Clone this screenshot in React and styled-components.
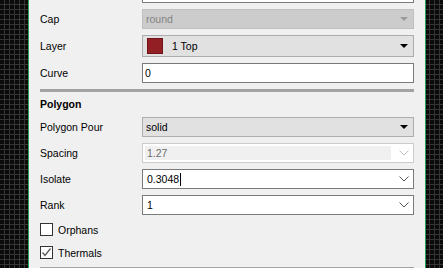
import React from "react";
import styled, { createGlobalStyle } from "styled-components";

const Global = createGlobalStyle`
  html, body { margin: 0; padding: 0; overflow: hidden; }
  body {
    width: 443px; height: 268px;
    font-family: "Liberation Sans", Arial, sans-serif;
    font-size: 10.5px;
    color: #000;
  }
`;

const Page = styled.div`
  display: flex;
  width: 443px;
  height: 268px;
  background-color: #0b0b0b;
  background-image:
    linear-gradient(to right, #353535 1px, transparent 1px),
    linear-gradient(to bottom, #353535 1px, transparent 1px);
  background-size: 5px 5px;
  background-position: 4px 4px;
`;

const Gutter = styled.div`
  width: ${(p) => p.$w || 28}px;
  flex: ${(p) => (p.$grow ? 1 : "none")};
`;

const Panel = styled.div`
  width: 396px;
  height: 268px;
  background: #f0f0f0;
  border-left: 1px solid #23a05a;
  border-right: 1px solid #23a05a;
  overflow: hidden;
  box-sizing: content-box;
`;

const Content = styled.div`
  display: flex;
  flex-direction: column;
  gap: 6px;
  padding: 0 11px;
  margin-top: -17px;
`;

const Row = styled.div`
  display: grid;
  grid-template-columns: 102px 1fr;
  align-items: center;
  height: ${(p) => p.$h || 20}px;
`;

const Label = styled.span`
  white-space: nowrap;
`;

const Title = styled.div`
  font-weight: bold;
  height: 13px;
  line-height: 13px;
`;

const Separator = styled.div`
  height: 3px;
  background: #a3a3a3;
`;

const Field = styled.div`
  box-sizing: border-box;
  height: 100%;
  display: flex;
  align-items: center;
  border: 1px solid ${(p) => p.$border || "#7a7a7a"};
  background: ${(p) => p.$bg || "#fff"};
  color: ${(p) => p.$color || "#000"};
  padding-left: ${(p) => p.$pl ?? 2}px;
  padding-right: 4px;
  white-space: nowrap;
`;

const FieldText = styled.span`
  flex: 1;
  display: flex;
  align-items: center;
`;

const Caret = styled.span`
  display: inline-block;
  width: 1px;
  height: 13px;
  background: #000;
  margin-left: 1px;
`;

const Triangle = styled.span`
  width: 0;
  height: 0;
  border-left: 4px solid transparent;
  border-right: 4px solid transparent;
  border-top: 4px solid ${(p) => p.$color || "#000"};
  margin-right: 1px;
`;

const Swatch = styled.span`
  width: 16px;
  height: 16px;
  box-sizing: border-box;
  background: #921f24;
  border: 1px solid #731419;
  margin-right: 9px;
`;

const InnerGray = styled.span`
  flex: 1;
  align-self: stretch;
  margin: 2px 0;
  background: #f0f0f0;
  color: #6d6d6d;
  display: flex;
  align-items: center;
  padding-left: 2px;
`;

const Chevron = ({ color = "#555" }) => (
  <svg width="10" height="6" viewBox="0 0 10 6" style={{ marginLeft: 8 }}>
    <path d="M0.5 0.5 L5 5 L9.5 0.5" fill="none" stroke={color} strokeWidth="1" />
  </svg>
);

const CheckRow = styled.label`
  display: flex;
  align-items: center;
  gap: 5px;
  height: 17px;
`;

const Box = styled.span`
  width: 13px;
  height: 13px;
  box-sizing: border-box;
  border: 1px solid #333;
  background: #fff;
  display: flex;
  align-items: center;
  justify-content: center;
`;

const Check = () => (
  <svg width="11" height="11" viewBox="0 0 11 11">
    <path d="M1.5 5.5 L4 8.5 L9.5 1.5" fill="none" stroke="#5a5a5a" strokeWidth="1.3" />
  </svg>
);

export default function App() {
  return (
    <>
      <Global />
      <Page>
        <Gutter $w={28} />
        <Panel>
          <Content>
            <Row>
              <Label />
              <Field />
            </Row>
            <Row>
              <Label>Cap</Label>
              <Field $bg="#cccccc" $border="#bfbfbf" $color="#838383" $pl={3}>
                <FieldText>round</FieldText>
                <Triangle $color="#9a9a9a" />
              </Field>
            </Row>
            <Row $h={22}>
              <Label>Layer</Label>
              <Field $bg="#e1e1e1" $border="#adadad" $pl={4}>
                <Swatch />
                <FieldText>1 Top</FieldText>
                <Triangle />
              </Field>
            </Row>
            <Row>
              <Label>Curve</Label>
              <Field>
                <FieldText>0</FieldText>
              </Field>
            </Row>
            <Separator />
            <Title>Polygon</Title>
            <Row>
              <Label>Polygon Pour</Label>
              <Field $bg="#e1e1e1" $border="#adadad" $pl={3}>
                <FieldText>solid</FieldText>
                <Triangle />
              </Field>
            </Row>
            <Row>
              <Label>Spacing</Label>
              <Field $border="#cccccc" $pl={2}>
                <InnerGray>1.27</InnerGray>
                <Chevron color="#c0c0c0" />
              </Field>
            </Row>
            <Row>
              <Label>Isolate</Label>
              <Field $pl={4}>
                <FieldText>
                  0.3048
                  <Caret />
                </FieldText>
                <Chevron />
              </Field>
            </Row>
            <Row>
              <Label>Rank</Label>
              <Field $pl={4}>
                <FieldText>1</FieldText>
                <Chevron />
              </Field>
            </Row>
            <CheckRow>
              <Box />
              Orphans
            </CheckRow>
            <CheckRow>
              <Box>
                <Check />
              </Box>
              Thermals
            </CheckRow>
            <Separator />
          </Content>
        </Panel>
        <Gutter $grow />
      </Page>
    </>
  );
}
